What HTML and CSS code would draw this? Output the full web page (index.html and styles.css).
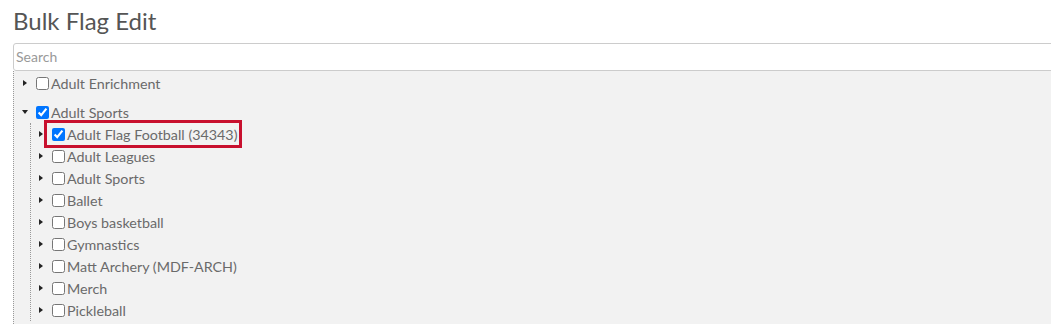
FILE: index.html
```html
<!DOCTYPE html>
<html lang="en">

<head>
    <title>Bulk Flag Edit</title>
    <link rel="stylesheet" href="styles.css">
</head>

<body>
    <div class="page">
        <h1 class="page-title">Bulk Flag Edit</h1>

        <div class="flag-editor">
            <input type="text" class="search-input" placeholder="Search">

            <!-- Flag tree -->
            <ul class="flag-tree">
                <li class="tree-node">
                    <div class="node-row">
                        <span class="toggle"></span>
                        <label class="node-label"><input type="checkbox">Adult Enrichment</label>
                    </div>
                </li>
                <li class="tree-node open">
                    <div class="node-row">
                        <span class="toggle"></span>
                        <label class="node-label"><input type="checkbox" checked>Adult Sports</label>
                    </div>
                    <ul class="flag-tree child">
                        <li class="tree-node">
                            <div class="node-row">
                                <span class="toggle"></span>
                                <label class="node-label highlighted"><input type="checkbox" checked>Adult Flag Football (34343)</label>
                            </div>
                        </li>
                        <li class="tree-node">
                            <div class="node-row">
                                <span class="toggle"></span>
                                <label class="node-label"><input type="checkbox">Adult Leagues</label>
                            </div>
                        </li>
                        <li class="tree-node">
                            <div class="node-row">
                                <span class="toggle"></span>
                                <label class="node-label"><input type="checkbox">Adult Sports</label>
                            </div>
                        </li>
                        <li class="tree-node">
                            <div class="node-row">
                                <span class="toggle"></span>
                                <label class="node-label"><input type="checkbox">Ballet</label>
                            </div>
                        </li>
                        <li class="tree-node">
                            <div class="node-row">
                                <span class="toggle"></span>
                                <label class="node-label"><input type="checkbox">Boys basketball</label>
                            </div>
                        </li>
                        <li class="tree-node">
                            <div class="node-row">
                                <span class="toggle"></span>
                                <label class="node-label"><input type="checkbox">Gymnastics</label>
                            </div>
                        </li>
                        <li class="tree-node">
                            <div class="node-row">
                                <span class="toggle"></span>
                                <label class="node-label"><input type="checkbox">Matt Archery (MDF-ARCH)</label>
                            </div>
                        </li>
                        <li class="tree-node">
                            <div class="node-row">
                                <span class="toggle"></span>
                                <label class="node-label"><input type="checkbox">Merch</label>
                            </div>
                        </li>
                        <li class="tree-node">
                            <div class="node-row">
                                <span class="toggle"></span>
                                <label class="node-label"><input type="checkbox">Pickleball</label>
                            </div>
                        </li>
                    </ul>
                </li>
            </ul>
        </div>
    </div>
</body>

</html>
```

FILE: styles.css
```css
body {
    margin: 0;
    overflow: hidden;
    background-color: #ffffff;
    font-family: Lato, "Open Sans", sans-serif;
}

.page {
    padding: 6px 0 0 13px;
}

.page-title {
    margin: 0 0 8px 0;
    font-size: 24px;
    line-height: 29px;
    font-weight: 400;
    color: #555555;
}

.flag-editor {
    width: calc(100% + 20px);
}

.search-input {
    display: block;
    box-sizing: border-box;
    width: 100%;
    height: 28px;
    margin: 0;
    padding: 0 2px 1px 2px;
    font-family: Lato, sans-serif;
    font-size: 14px;
    color: #555;
    border: 1px solid #cccccc;
    border-radius: 3px 0 0 3px;
    outline: none;
}

.search-input::placeholder {
    color: #999999;
}

.flag-tree {
    list-style: none;
    margin: 0;
    padding: 1px 0 0 0;
    min-height: 260px;
    background-color: #f2f2f2;
    border-left: 1px dotted #999999;
}

.flag-tree.child {
    min-height: 0;
    margin-left: 16px;
    padding-top: 0;
}

.tree-node {
    margin-bottom: 7px;
}

.flag-tree.child .tree-node {
    margin-bottom: 0;
}

.node-row {
    display: flex;
    align-items: center;
    height: 22px;
    padding-left: 7px;
}

.flag-tree.child .node-row {
    padding-left: 6px;
}

.toggle {
    display: flex;
    align-items: center;
    justify-content: center;
    width: 8px;
    height: 22px;
    margin-right: 7px;
}

/* collapsed arrow */
.toggle::before {
    content: "";
    width: 0;
    height: 0;
    border-left: 4px solid #222222;
    border-top: 3.5px solid transparent;
    border-bottom: 3.5px solid transparent;
}

/* expanded arrow */
.tree-node.open > .node-row .toggle::before {
    border-top: 4px solid #222222;
    border-left: 3.5px solid transparent;
    border-right: 3.5px solid transparent;
    border-bottom: none;
}

.node-label {
    position: relative;
    display: inline-flex;
    align-items: center;
    height: 22px;
    font-size: 14.3px;
    color: #6a6a6a;
}

.node-label input {
    width: 13px;
    height: 13px;
    margin: 0 2px 0 0;
}

/* red annotation box */
.node-label.highlighted::after {
    content: "";
    position: absolute;
    top: -3px;
    bottom: -3px;
    left: -8px;
    right: -5px;
    border: 3px solid #c8102e;
}
```
